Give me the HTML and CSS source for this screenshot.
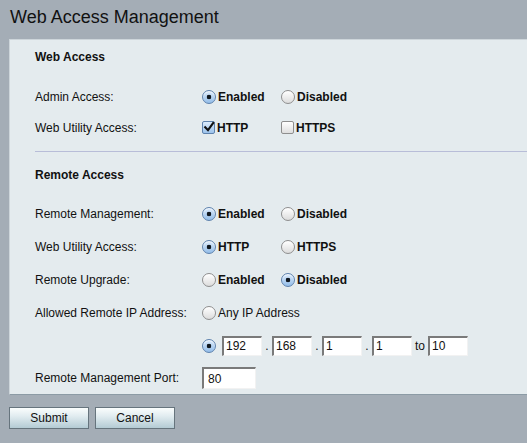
FILE: index.html
```html
<!DOCTYPE html>
<html>
<head>
<meta charset="utf-8">
<link rel="stylesheet" href="styles.css">
</head>
<body>
<h1 class="title">Web Access Management</h1>
<div class="panel">
  <h3 class="sec-head first">Web Access</h3>
  <div class="row r31">
    <span class="label">Admin Access:</span>
    <span class="opt"><span class="radio on"></span><b>Enabled</b></span>
    <span class="opt"><span class="radio"></span><b>Disabled</b></span>
  </div>
  <div class="row r31">
    <span class="label">Web Utility Access:</span>
    <span class="opt"><span class="check on"><svg viewBox="0 0 12 12" width="12" height="12"><path d="M2.2 6.2 L5 9.2 L10.2 2" fill="none" stroke="#111" stroke-width="2.1" stroke-linecap="square"/></svg></span><b>HTTP</b></span>
    <span class="opt"><span class="check"></span><b>HTTPS</b></span>
  </div>
  <div class="sep"></div>
  <h3 class="sec-head second">Remote Access</h3>
  <div class="rows2">
    <div class="row r33">
      <span class="label">Remote Management:</span>
      <span class="opt"><span class="radio on"></span><b>Enabled</b></span>
      <span class="opt"><span class="radio"></span><b>Disabled</b></span>
    </div>
    <div class="row r33">
      <span class="label">Web Utility Access:</span>
      <span class="opt"><span class="radio on"></span><b>HTTP</b></span>
      <span class="opt"><span class="radio"></span><b>HTTPS</b></span>
    </div>
    <div class="row r33">
      <span class="label">Remote Upgrade:</span>
      <span class="opt"><span class="radio"></span><b>Enabled</b></span>
      <span class="opt"><span class="radio on"></span><b>Disabled</b></span>
    </div>
    <div class="row r33">
      <span class="label">Allowed Remote IP Address:</span>
      <span class="opt wide"><span class="radio"></span>Any IP Address</span>
    </div>
    <div class="row r33">
      <span class="label"></span>
      <span class="radio on"></span>
      <span class="ip">
        <input class="field ipf" type="text" value="192"><span class="dot">.</span><input class="field ipf" type="text" value="168"><span class="dot">.</span><input class="field ipf" type="text" value="1"><span class="dot">.</span><input class="field ipf" type="text" value="1"><span class="to">to</span><input class="field ipf" type="text" value="10">
      </span>
    </div>
    <div class="row rlast">
      <span class="label">Remote Management Port:</span>
      <input class="field port" type="text" value="80">
    </div>
  </div>
</div>
<div class="buttons">
  <button class="btn">Submit</button>
  <button class="btn">Cancel</button>
</div>
</body>
</html>
```
FILE: styles.css
```css
html, body {
  margin: 0;
  padding: 0;
}
body {
  background: #a4adb6;
  font-family: "Liberation Sans", Arial, Helvetica, sans-serif;
  font-size: 12px;
  color: #111;
  overflow: hidden;
  width: 527px;
  height: 443px;
}
.title {
  margin: 0;
  padding: 7px 0 0 10px;
  font-size: 18px;
  font-weight: normal;
  line-height: 21px;
  color: #111;
}
.panel {
  margin: 11px 0 0 9px;
  background: #e4ebee;
  border: 1px solid #cdd5da;
  border-right: none;
  border-bottom-color: #8c9ba5;
  padding: 0 0 0 25px;
}
.sec-head {
  margin: 0;
  font-size: 12px;
  font-weight: bold;
  line-height: 20px;
  height: 20px;
}
.sec-head.first { padding-top: 7px; margin-bottom: 14px; }
.sec-head.second { margin-top: 13px; margin-bottom: 12px; }
.row {
  display: flex;
  align-items: center;
}
.r31 { height: 31px; }
.r33 { height: 33px; }
.rlast { height: 32px; }
.label {
  width: 167px;
  flex: none;
}
.opt {
  display: flex;
  align-items: center;
  width: 79px;
  flex: none;
}
.opt.wide { width: auto; }
.opt b { font-weight: bold; }
.radio {
  width: 12px;
  height: 12px;
  border-radius: 50%;
  border: 1px solid #8e8e8e;
  background: linear-gradient(#ffffff, #dcdcdc);
  margin-right: 2px;
  flex: none;
  box-shadow: inset 0 1px 1px rgba(255,255,255,0.8);
}
.radio.on {
  border-color: #5e82ad;
  background:
    radial-gradient(circle at 50% 50%, #101820 0 2px, transparent 2.6px),
    linear-gradient(#dcebfb, #93bde9);
}
.check {
  width: 11px;
  height: 11px;
  border: 1px solid #8e8e8e;
  border-radius: 2px;
  background: linear-gradient(#ffffff, #dedede);
  margin-right: 2px;
  flex: none;
  position: relative;
}
.check.on {
  border-color: #5e82ad;
  background: linear-gradient(#dcebfb, #9cc3ec);
}
.check svg {
  position: absolute;
  left: 0;
  top: -1px;
}
.sep {
  height: 1px;
  background: #b8bdd8;
  margin-top: 8px;
}
.ip {
  display: flex;
  align-items: center;
  margin-left: 4px;
}
.field {
  font-family: "Liberation Sans", Arial, Helvetica, sans-serif;
  font-size: 12px;
  color: #111;
  background: #fff;
  border: 1px solid #f2f2f2;
  border-top: 2px solid #7a7a7a;
  border-left: 2px solid #7a7a7a;
  padding: 0 0 0 2px;
  margin: 0;
  box-sizing: border-box;
  outline: none;
}
.ipf {
  width: 40px;
  height: 20px;
}
.dot {
  width: 10px;
  text-align: center;
}
.to {
  margin: 0 2px 0 3px;
  width: 11px;
}
.port {
  width: 54px;
  height: 22px;
  padding-left: 4px;
}
.buttons {
  display: flex;
  gap: 6px;
  margin: 12px 0 0 9px;
}
.btn {
  width: 80px;
  height: 22px;
  font-family: "Liberation Sans", Arial, Helvetica, sans-serif;
  font-size: 12px;
  color: #111;
  border: 1px solid #66747d;
  background: linear-gradient(#fafdfd, #e1ecf0 40%, #b4cbd4);
  padding: 0;
  margin: 0;
}
```
